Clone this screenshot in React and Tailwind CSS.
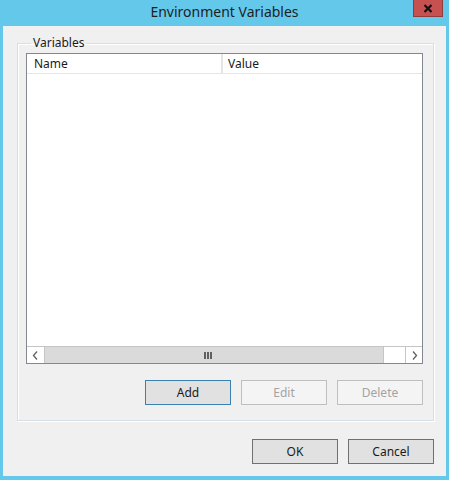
import React from "react";

function WinButton({ children, variant = "normal" }) {
  const styles = {
    normal: "border-[#707070] bg-[#e1e1e1] text-[#1a1a1a]",
    focused: "border-[#3c7fb1] bg-[#e1e1e1] text-[#1a1a1a]",
    disabled: "border-[#bfbfbf] bg-[#f4f4f4] text-[#a3a3a3]",
  };
  return (
    <button
      className={`w-[86px] h-[25px] border text-[12px] leading-none flex items-center justify-center ${styles[variant]}`}
    >
      {children}
    </button>
  );
}

function Chevron({ dir }) {
  return (
    <svg width="7" height="9" viewBox="0 0 7 9" className="text-[#606060]">
      <path
        d={dir === "left" ? "M5 0.5 L1.5 4.5 L5 8.5" : "M2 0.5 L5.5 4.5 L2 8.5"}
        fill="none"
        stroke="currentColor"
        strokeWidth="1.3"
      />
    </svg>
  );
}

export default function App() {
  return (
    <div className="w-[449px] h-[480px] bg-[#63c8ea] flex flex-col font-['Noto_Sans',sans-serif] select-none">
      {/* Title bar */}
      <div className="relative h-[26px] shrink-0 flex items-center justify-center pb-[3px]">
        <span className="text-[14px] text-[#1e1e1e]">Environment Variables</span>
        <div className="absolute right-[6px] top-0 w-[30px] h-[17px] bg-[#c75050] border border-t-0 border-[#8f3b3b] flex items-center justify-center">
          <svg width="10" height="9" viewBox="0 0 10 9">
            <path d="M1.5 1 L8.5 8 M8.5 1 L1.5 8" stroke="#111" strokeWidth="2.2" />
          </svg>
        </div>
      </div>

      {/* Client area */}
      <div className="mx-[3px] h-[450px] bg-[#f0f0f0] flex flex-col">
        <fieldset className="mt-[9px] ml-[14px] mr-[12px] border border-[#d5dfe5] shadow-[inset_1px_1px_0_#fff,1px_1px_0_#fff] pl-[8px] pr-[10px] pt-[2px] pb-[15px]">
          <legend className="ml-[5px] px-[2px] text-[12px] leading-[16px] text-[#1a1a1a]">Variables</legend>

          {/* List view */}
          <div className="h-[311px] border border-[#828790] bg-white flex flex-col">
            <div className="h-[20px] shrink-0 flex border-b border-[#e5e5e5] text-[12px] text-[#1a1a1a]">
              <div className="w-[196px] pl-[7px] flex items-center border-r-2 border-[#e5e5e5]">Name</div>
              <div className="flex-1 pl-[5px] flex items-center">Value</div>
            </div>
            <div className="flex-1" />
            {/* Horizontal scrollbar */}
            <div className="h-[17px] shrink-0 flex border-t border-[#c5c5c5] bg-white">
              <div className="w-[18px] flex items-center justify-center border-r border-[#c5c5c5]">
                <Chevron dir="left" />
              </div>
              <div className="w-[339px] bg-[#dadada] border-r border-[#c5c5c5] flex items-center justify-center">
                <div className="flex gap-[1px] ml-[-12px]">
                  <div className="w-[2px] h-[7px] bg-[#606060]" />
                  <div className="w-[2px] h-[7px] bg-[#606060]" />
                  <div className="w-[2px] h-[7px] bg-[#606060]" />
                </div>
              </div>
              <div className="flex-1" />
              <div className="w-[17px] flex items-center justify-center border-l border-[#c5c5c5]">
                <Chevron dir="right" />
              </div>
            </div>
          </div>

          <div className="mt-[16px] flex justify-end gap-[10px]">
            <WinButton variant="focused">Add</WinButton>
            <WinButton variant="disabled">Edit</WinButton>
            <WinButton variant="disabled">Delete</WinButton>
          </div>
        </fieldset>

        <div className="mt-[18px] mr-[12px] flex justify-end gap-[10px]">
          <WinButton>OK</WinButton>
          <WinButton>Cancel</WinButton>
        </div>
      </div>
    </div>
  );
}
